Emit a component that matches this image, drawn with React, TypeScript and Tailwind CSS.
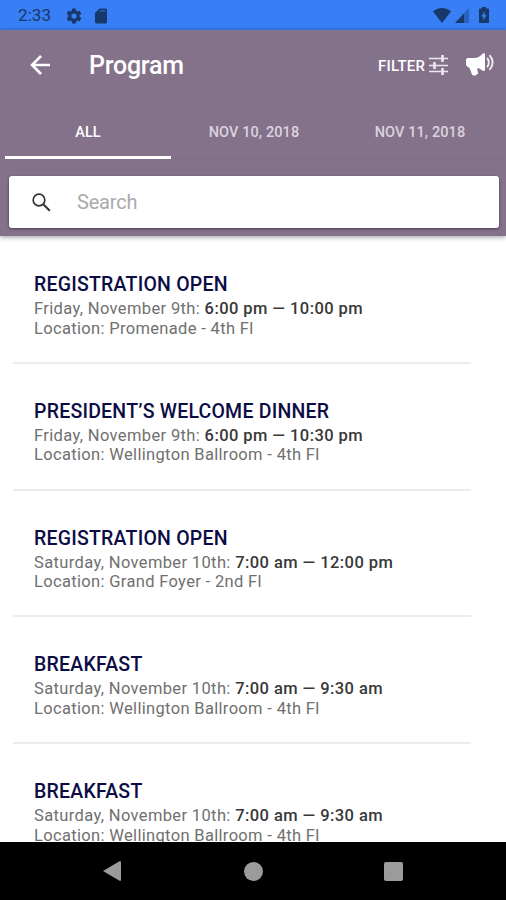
const sessions = [
  { title: 'REGISTRATION OPEN', day: 'Friday, November 9th:', time: '6:00 pm — 10:00 pm', place: 'Promenade - 4th Fl' },
  { title: 'PRESIDENT’S WELCOME DINNER', day: 'Friday, November 9th:', time: '6:00 pm — 10:30 pm', place: 'Wellington Ballroom - 4th Fl' },
  { title: 'REGISTRATION OPEN', day: 'Saturday, November 10th:', time: '7:00 am — 12:00 pm', place: 'Grand Foyer - 2nd Fl' },
  { title: 'BREAKFAST', day: 'Saturday, November 10th:', time: '7:00 am — 9:30 am', place: 'Wellington Ballroom - 4th Fl' },
  { title: 'BREAKFAST', day: 'Saturday, November 10th:', time: '7:00 am — 9:30 am', place: 'Wellington Ballroom - 4th Fl' },
];

const tabs = ['ALL', 'NOV 10, 2018', 'NOV 11, 2018'];

function StatusBar() {
  return (
    <div className="flex h-[30px] shrink-0 items-center bg-[#387ef5] pr-[17px] pl-[18px] text-[#173969]">
      <span className="w-[47px] text-[17px] leading-[32px] tracking-[0.1px]">2:33</span>
      <svg className="mt-px size-[18px]" viewBox="0 0 24 24" fill="currentColor">
        <path d="M19.43 12.98c.04-.32.07-.64.07-.98s-.03-.66-.07-.98l2.11-1.65c.19-.15.24-.42.12-.64l-2-3.46c-.12-.22-.39-.3-.61-.22l-2.49 1c-.52-.4-1.08-.73-1.69-.98l-.38-2.65A.49.49 0 0 0 14 2h-4c-.25 0-.46.18-.49.42l-.38 2.65c-.61.25-1.17.59-1.69.98l-2.49-1c-.23-.09-.49 0-.61.22l-2 3.46c-.13.22-.07.49.12.64l2.11 1.65c-.04.32-.07.65-.07.98s.03.66.07.98l-2.11 1.65c-.19.15-.24.42-.12.64l2 3.46c.12.22.39.3.61.22l2.49-1c.52.4 1.08.73 1.69.98l.38 2.65c.03.24.24.42.49.42h4c.25 0 .46-.18.49-.42l.38-2.65c.61-.25 1.17-.59 1.69-.98l2.49 1c.23.09.49 0 .61-.22l2-3.46c.12-.22.07-.49-.12-.64l-2.11-1.65zM12 15.500a3.500 3.500 0 1 1 0-7 3.500 3.500 0 0 1 0 7z" />
      </svg>
      <svg className="mt-px ml-[9px] size-[18px]" viewBox="0 0 24 24" fill="currentColor">
        <path d="M18 2h-8L4 8v12c0 1.100.9 2 2 2h12c1.100 0 2-.9 2-2V4c0-1.100-.9-2-2-2z" />
        <path d="M10 4h8v2.500h-8z" fill="#387ef5" opacity=".45" />
      </svg>
      <div className="ml-auto flex items-center">
        <svg className="h-[15px] w-[18px]" viewBox="0 0 18 15" fill="currentColor">
          <path d="M9 15 0 3.500C2.400 1.300 5.500 0 9 0s6.600 1.300 9 3.500z" />
        </svg>
        <svg className="ml-1 h-[15px] w-[14px]" viewBox="0 0 14 15" fill="currentColor">
          <path d="M0 15 14 0v15z" opacity=".4" />
          <path d="M0 15 9 5.400V15z" />
        </svg>
        <svg className="ml-[10px] h-[16px] w-[10px]" viewBox="0 0 10 16" fill="currentColor">
          <path d="M3 0h4v1.500h2c.6 0 1 .4 1 1V15c0 .6-.4 1-1 1H1c-.6 0-1-.4-1-1V2.500c0-.6.4-1 1-1h2z" />
          <path d="M5.600 4.300 2.300 9.600h2v3.700l3.400-5.300H5.600z" fill="#387ef5" />
        </svg>
      </div>
    </div>
  );
}

function TitleBar() {
  return (
    <div className="flex h-[73px] items-start pt-[17px] pl-[30px] text-white">
      <svg className="mt-[8px] h-[20px] w-[20px]" viewBox="0 0 20 20" fill="none" stroke="currentColor" strokeWidth="2.500">
        <path d="M20 10H2M11 1 2 10l9 9" />
      </svg>
      <h1 className="ml-[39px] w-[289px] text-[25px] leading-[38px] font-medium tracking-[-0.25px]">Program</h1>
      <span className="w-[51px] text-[15px] leading-[38px] font-medium whitespace-nowrap tracking-[0.2px]">FILTER</span>
      <svg className="mt-[8px] h-[20px] w-[19px]" viewBox="0 0 19 20" stroke="#eee6ef" fill="none">
        <path d="M0 3.500h19M0 10.500h19M0 16.500h19" strokeWidth="1.700" />
        <path d="M13.500 0v7M5.500 7v7M13.500 13v7" strokeWidth="2.600" />
      </svg>
      <svg className="mt-[6px] ml-[18px] h-[23px] w-[29px]" viewBox="0 0 29 23">
        <path d="M0 6.200 1.500 5H8c4 0 6.500-2 9-4.800L19 .5v17l-2 .5c-1.700-1.600-3.200-2.600-5-3.100l-.8 1.300 1 4.300-3.200 2.300-2.800-.8-2.700-7L1.800 14 0 12z" fill="#fff" />
        <path d="M21.500 5.500c1.700 1.800 1.700 6.200 0 8M24 2.800c3.500 3.700 3.500 9.700 0 13.400" fill="none" stroke="#f3edf4" strokeWidth="1.900" strokeLinecap="round" />
      </svg>
    </div>
  );
}

function Tabs() {
  return (
    <div className="mr-[3px] ml-[5px] grid h-[56px] grid-cols-3">
      {tabs.map((tab, i) => (
        <div
          key={tab}
          className={
            i === 0
              ? 'border-b-[3px] border-white pt-[17px] text-center text-[14.500px] leading-[26px] font-medium text-white'
              : 'border-b border-[#7f6c86] pt-[17px] text-center text-[14.500px] leading-[26px] font-medium tracking-[0.1px] text-[#dcd2de]'
          }
        >
          {tab}
        </div>
      ))}
    </div>
  );
}

function SearchBox() {
  return (
    <div className="mt-[17px] mr-[7px] ml-[9px] flex h-[52px] items-center rounded-[3px] bg-white pl-[23px] shadow-[0_1px_3px_rgba(40,20,50,0.6)]">
      <svg className="h-[19px] w-[19px]" viewBox="0 0 19 19" fill="none" stroke="#333">
        <circle cx="7" cy="7" r="5.800" strokeWidth="1.700" />
        <path d="m11.200 11.200 6.600 6.600" strokeWidth="2" />
      </svg>
      <span className="ml-[26px] text-[20px] leading-6 tracking-[-0.2px] text-[#aaa]">Search</span>
    </div>
  );
}

export default function App() {
  return (
    <div className="flex h-[900px] w-[506px] flex-col overflow-hidden bg-white font-['Roboto',sans-serif]">
      <StatusBar />
      <header className="z-10 h-[206px] shrink-0 bg-[#84728b] shadow-[0_1px_5px_rgba(0,0,0,0.4)]">
        <TitleBar />
        <Tabs />
        <SearchBox />
      </header>
      <main className="min-h-0 flex-1 overflow-hidden pt-px pl-[13px]">
        {sessions.map((s, i) => (
          <article key={i} className="h-[126.750px] w-[458px] border-b-2 border-[#ececec] pt-[36px] pl-[21px] whitespace-nowrap">
            <h2 className="text-[19.500px] leading-6 font-medium tracking-[0.22px] text-[#0c0c45]">{s.title}</h2>
            <p className="mt-[2px] text-[16.500px] leading-[19.500px] tracking-[0.36px] text-[#707070]">
              {s.day} <b className="font-medium tracking-[0.43px] text-[#383838]">{s.time}</b>
            </p>
            <p className="text-[16.500px] leading-[19.500px] tracking-[0.33px] text-[#707070]">Location: {s.place}</p>
          </article>
        ))}
      </main>
      <nav className="flex h-[58px] shrink-0 items-center bg-black pl-[103px]">
        <svg className="h-[20px] w-[18px]" viewBox="0 0 18 20" fill="#9b9b9b">
          <path d="M0 10 16.500.3Q18-.2 18 1v18q0 1.200-1.500.7z" />
        </svg>
        <div className="ml-[123px] size-[19px] rounded-full bg-[#9b9b9b]" />
        <div className="ml-[121px] size-[19px] rounded-[2px] bg-[#9b9b9b]" />
      </nav>
    </div>
  );
}
